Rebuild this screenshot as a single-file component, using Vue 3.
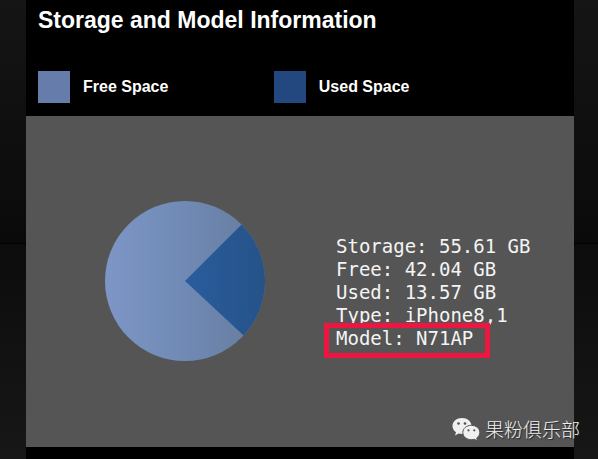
<script setup>
const legend = [
  { label: 'Free Space', kind: 'free' },
  { label: 'Used Space', kind: 'used' },
]
const details = [
  { label: 'Storage', value: '55.61 GB' },
  { label: 'Free', value: '42.04 GB' },
  { label: 'Used', value: '13.57 GB' },
  { label: 'Type', value: 'iPhone8,1' },
  { label: 'Model', value: 'N71AP', marked: true },
]

const radius = 80
const start = -Math.PI / 4
const end = start + (13.57 / 55.61) * 2 * Math.PI
const point = (a) => `${radius + radius * Math.cos(a)} ${radius + radius * Math.sin(a)}`
const usedPath = `M80 80L${point(start)}A80 80 0 0 1 ${point(end)}Z`
</script>

<template>
  <div class="page">
    <main class="panel">
      <header class="head">
        <h1>Storage and Model Information</h1>
        <ul class="legend">
          <li v-for="item in legend" :key="item.kind">
            <span class="swatch" :class="item.kind"></span>{{ item.label }}
          </li>
        </ul>
      </header>
      <section class="body">
        <svg class="pie" viewBox="0 0 160 160" role="img" aria-label="Free and used space">
          <defs>
            <linearGradient id="freeFill">
              <stop offset="0" stop-color="#7d96c6" />
              <stop offset="0.5" stop-color="#708ab5" />
              <stop offset="1" stop-color="#667b9b" />
            </linearGradient>
            <linearGradient id="usedFill">
              <stop offset="0" stop-color="#295d9e" />
              <stop offset="1" stop-color="#265288" />
            </linearGradient>
          </defs>
          <circle cx="80" cy="80" r="80" fill="url(#freeFill)" />
          <path :d="usedPath" fill="url(#usedFill)" />
        </svg>
        <ul class="details">
          <li v-for="row in details" :key="row.label" :class="{ marked: row.marked }">{{ row.label }}: {{ row.value }}</li>
        </ul>
      </section>
    </main>
    <div class="credit">
      <svg class="bubbles" viewBox="0 0 28 24" aria-hidden="true">
        <path d="M10 1C4.700 1 .5 4.500 .5 9c0 2.600 1.300 4.700 3.500 6.200L3 18.500l3.700-2c1.100.3 2.200.5 3.300.5C15.300 17 19.500 13.500 19.500 9S15.300 1 10 1z" fill="#f0f0f0" />
        <path d="M19.300 8.300c-4.700 0-8.500 3.200-8.500 7.200s3.800 7.200 8.500 7.200c1 0 2-.2 2.900-.4l3.300 1.600-.8-2.900c1.900-1.300 3.100-3.300 3.100-5.500 0-4-3.800-7.200-8.500-7.200z" fill="#f0f0f0" stroke="#555" stroke-width="1" />
        <g fill="#505050">
          <circle cx="6.500" cy="6.500" r="1.300" />
          <circle cx="13" cy="6.500" r="1.300" />
          <circle cx="16.500" cy="13.300" r="1.100" />
          <circle cx="22.300" cy="13.300" r="1.100" />
        </g>
      </svg>
      <span>果粉俱乐部</span>
    </div>
  </div>
</template>

<style>
body {
  margin: 0;
  background: #000;
}
</style>

<style scoped>
.page {
  position: relative;
  box-sizing: border-box;
  min-height: 100vh;
  padding: 0 24px 0 26px;
  display: flex;
  background: linear-gradient(#151515, #0a0a0a 53%, #000 53%, #000 calc(53% + 1px), #0c0c0c calc(53% + 1px), #171717);
  color: #fff;
  font-family: "Liberation Sans", Arial, sans-serif;
}
.panel {
  flex: 1;
  display: flex;
  flex-direction: column;
  padding-bottom: 12px;
  background: #000;
}
.head {
  padding: 8px 12px 13px;
}
h1 {
  margin: 0 0 39px;
  font-size: 23px;
  line-height: 24px;
  font-weight: 700;
}
.legend,
.details {
  margin: 0;
  padding: 0;
  list-style: none;
}
.legend {
  display: grid;
  grid-template-columns: 9fr 11fr;
  font-size: 16px;
  font-weight: 700;
}
.legend li {
  display: flex;
  align-items: center;
  gap: 13px;
}
.swatch {
  width: 32px;
  height: 32px;
}
.free {
  background: #667dac;
}
.used {
  background: #23477f;
}
.body {
  flex: 1;
  display: flex;
  align-items: center;
  gap: 71px;
  padding: 24px 24px 26px 79px;
  background: #555;
}
.pie {
  width: 160px;
  height: 160px;
  flex: none;
}
.details {
  padding-top: 24px;
  color: #f4f4f4;
  font: 19px/23px "DejaVu Sans Mono", monospace;
  white-space: nowrap;
}
.marked {
  position: relative;
}
.marked::after {
  content: "";
  position: absolute;
  top: -4px;
  left: -12px;
  width: 156px;
  height: 25px;
  border: 5px solid #ee1540;
}
.credit {
  position: absolute;
  right: 18px;
  bottom: 16px;
  display: flex;
  align-items: center;
  gap: 5px;
  font: 300 19px/28px "Noto Sans CJK SC", sans-serif;
  color: #f0f0f0;
  text-shadow: 1px 1px 1px #222;
}
.bubbles {
  width: 28px;
  height: 24px;
}
</style>
